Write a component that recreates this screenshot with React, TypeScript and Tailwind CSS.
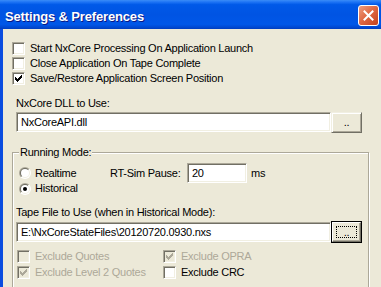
import React from 'react';

const sunken =
  'border border-t-[#ACA899] border-l-[#ACA899] border-b-white border-r-white shadow-[inset_1px_1px_0_#716F64,inset_-1px_-1px_0_#F1EFE2]';

function CheckMark({ color }: { color: string }) {
  const cols = [2, 3, 4, 3, 2, 1, 0];
  return (
    <svg width="7" height="7" viewBox="0 0 7 7" className="absolute left-[2px] top-[2px]" shapeRendering="crispEdges">
      {cols.map((y, x) => (
        <rect key={x} x={x} y={y} width="1" height="3" fill={color} />
      ))}
    </svg>
  );
}

function Check({ checked, disabled }: { checked?: boolean; disabled?: boolean }) {
  return (
    <span className={`relative block w-[13px] h-[13px] shrink-0 ${sunken} ${disabled ? 'bg-[#ECE9D8]' : 'bg-white'}`}>
      {checked && <CheckMark color={disabled ? '#ACA899' : '#000'} />}
    </span>
  );
}

function Radio({ checked, id }: { checked?: boolean; id: string }) {
  return (
    <svg width="12" height="12" viewBox="0 0 12 12" className="shrink-0 block">
      <defs>
        <linearGradient id={id + 'o'} x1="0" y1="0" x2="1" y2="1">
          <stop offset="0.5" stopColor="#ACA899" />
          <stop offset="0.5" stopColor="#ffffff" />
        </linearGradient>
        <linearGradient id={id + 'i'} x1="0" y1="0" x2="1" y2="1">
          <stop offset="0.5" stopColor="#716F64" />
          <stop offset="0.5" stopColor="#F1EFE2" />
        </linearGradient>
      </defs>
      <circle cx="6" cy="6" r="6" fill={`url(#${id}o)`} />
      <circle cx="6" cy="6" r="5" fill={`url(#${id}i)`} />
      <circle cx="6" cy="6" r="4" fill="#fff" />
      {checked && <circle cx="6" cy="6" r="2" fill="#000" />}
    </svg>
  );
}

function Btn({ isDefault }: { isDefault?: boolean }) {
  if (isDefault) {
    return (
      <div className="w-[31px] h-[22px] border border-black shrink-0">
        <div className="relative w-full h-full flex items-center justify-center bg-[#ECE9D8] border border-t-white border-l-white border-b-[#716F64] border-r-[#716F64] shadow-[inset_-1px_-1px_0_#ACA899]">
          <div className="absolute left-[3px] top-[3px] right-[3px] bottom-[3px] border border-dotted border-black" />
          <span className="leading-[11px]">..</span>
        </div>
      </div>
    );
  }
  return (
    <div className="w-[31px] h-[21px] shrink-0 flex items-center justify-center bg-[#ECE9D8] border border-t-[#F1EFE2] border-l-[#F1EFE2] border-b-[#716F64] border-r-[#716F64] shadow-[inset_1px_1px_0_#fff,inset_-1px_-1px_0_#ACA899]">
      <span className="leading-[11px]">..</span>
    </div>
  );
}

function CheckRow({
  label,
  checked,
  disabled,
}: {
  label: string;
  checked?: boolean;
  disabled?: boolean;
}) {
  return (
    <div className="flex items-center gap-[5px] h-[15px]">
      <Check checked={checked} disabled={disabled} />
      <span className={disabled ? 'text-[#ACA899]' : 'text-black'}>{label}</span>
    </div>
  );
}

export default function App() {
  return (
    <div className="w-[381px] h-[287px] overflow-hidden flex flex-col font-['Liberation_Sans',Arial,sans-serif] text-[11px] leading-[13px] tracking-[-0.25px] text-black">
      {/* Title bar */}
      <div className="h-[29px] shrink-0 flex items-start bg-[linear-gradient(to_bottom,#3A8CF7_0%,#1E74F5_7%,#0059E8_16%,#0054E3_50%,#0057E8_84%,#0049D2_94%,#003DBE_100%)]">
        <span className="ml-[5px] mt-[9px] text-white font-bold text-[13px] leading-[16px] tracking-[-0.15px] [text-shadow:1px_1px_0_#0A1883]">
          Settings &amp; Preferences
        </span>
        <div className="ml-auto mr-[2px] mt-[5px] w-[21px] h-[21px] rounded-[3px] border border-white bg-[linear-gradient(135deg,#EE9D80_0%,#E06A44_45%,#C4411B_100%)] flex items-center justify-center">
          <svg width="11" height="11" viewBox="0 0 11 11">
            <path d="M1.5 1.5 L9.5 9.5 M9.5 1.5 L1.5 9.5" stroke="#fff" strokeWidth="2" strokeLinecap="square" />
          </svg>
        </div>
      </div>

      {/* Body */}
      <div className="flex-1 flex min-h-0">
        <div className="w-[3px] shrink-0 bg-[#0A4CDF]" />
        <div className="flex-1 bg-[#ECE9D8] pt-[12px] pl-[9px]">
          <CheckRow label="Start NxCore Processing On Application Launch" />
          <CheckRow label="Close Application On Tape Complete" />
          <CheckRow label="Save/Restore Application Screen Position" checked />

          <div className="mt-[11px] ml-[4px]">NxCore DLL to Use:</div>
          <div className="mt-[2px] ml-[4px] flex items-start">
            <div className={`w-[315px] h-[20px] bg-white flex items-center pl-[4px] ${sunken}`}>NxCoreAPI.dll</div>
            <Btn />
          </div>

          {/* Group box */}
          <div className="relative mt-[19px] w-[357px] border border-[#ACA899] shadow-[inset_1px_1px_0_#fff,1px_1px_0_#fff] pt-[10px] pl-[3px] pb-[20px]">
            <span className="absolute top-[-7px] left-[6px] px-[1px] bg-[#ECE9D8]">Running Mode:</span>

            <div className="flex items-center h-[20px] pl-[3px]">
              <div className="w-[91px] flex items-center gap-[4px]">
                <Radio id="r1" />
                <span>Realtime</span>
              </div>
              <span className="w-[77px]">RT-Sim Pause:</span>
              <div className={`w-[60px] h-[20px] bg-white flex items-center pl-[4px] ${sunken}`}>20</div>
              <span className="ml-[4px]">ms</span>
            </div>
            <div className="flex items-center gap-[4px] h-[15px] mt-[-2px] pl-[3px]">
              <Radio id="r2" checked />
              <span>Historical</span>
            </div>

            <div className="mt-[10px]">Tape File to Use (when in Historical Mode):</div>
            <div className="mt-[2px] flex items-center">
              <div className={`w-[315px] h-[20px] bg-white flex items-center pl-[4px] ${sunken}`}>
                E:\NxCoreStateFiles\20120720.0930.nxs
              </div>
              <Btn isDefault />
            </div>

            <div className="mt-[6px] pl-[1px] grid grid-cols-[146px_auto] gap-y-[1px]">
              <CheckRow label="Exclude Quotes" disabled />
              <CheckRow label="Exclude OPRA" checked disabled />
              <CheckRow label="Exclude Level 2 Quotes" checked disabled />
              <CheckRow label="Exclude CRC" />
            </div>
          </div>
        </div>
      </div>
    </div>
  );
}
